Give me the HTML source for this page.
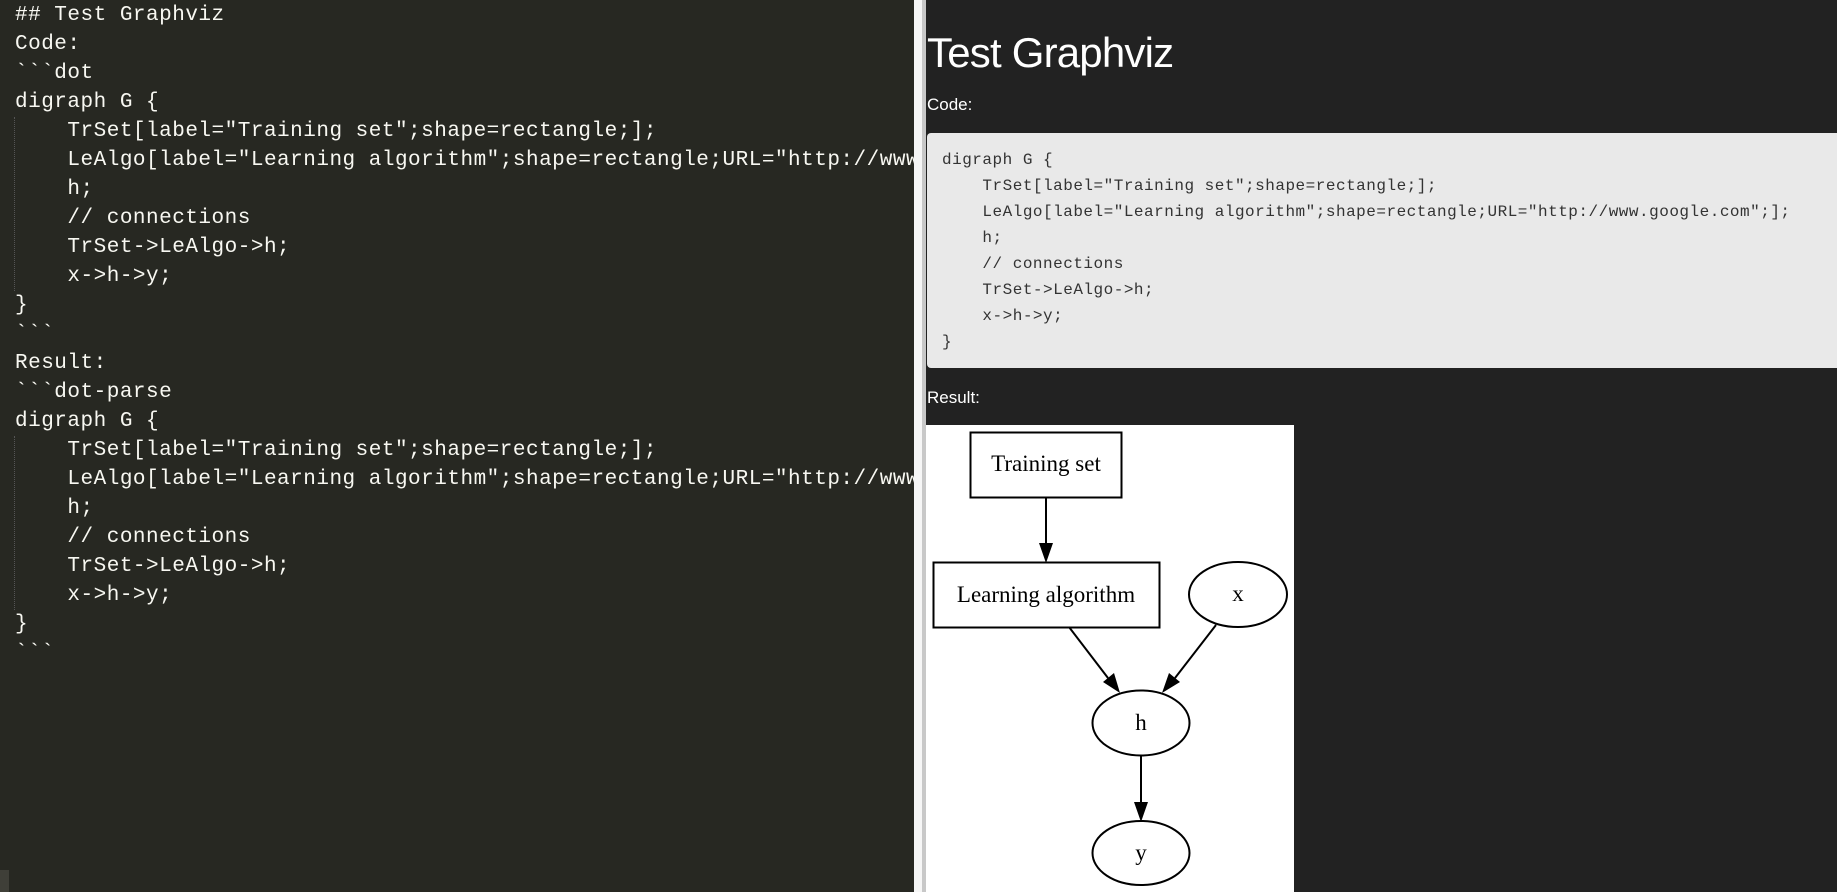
<!DOCTYPE html>
<html><head><meta charset="utf-8"><style>
*{margin:0;padding:0;box-sizing:border-box}
html,body{width:1837px;height:892px;overflow:hidden;background:#222}
#left{position:absolute;left:0;top:0;width:914px;height:892px;background:#272822;overflow:hidden}
#left .ln{position:absolute;left:15px;font-family:"Liberation Mono",monospace;font-size:21px;letter-spacing:0.5px;color:#f8f8f2;white-space:pre;line-height:29px;height:29px}
.guide{position:absolute;left:14px;width:0;border-left:1px dotted #555}
#sb1{position:absolute;left:914px;top:0;width:8px;height:892px;background:#f6f6f6}
#sb2{position:absolute;left:922px;top:0;width:4px;height:892px;background:#c8c8c8}
#right{position:absolute;left:926px;top:0;width:911px;height:892px;background:#222;color:#fff;font-family:"Liberation Sans",sans-serif;overflow:hidden}
h1{position:absolute;left:1px;top:29px;font-size:42px;font-weight:normal;letter-spacing:-0.8px;line-height:48px}
.lab{position:absolute;left:1px;font-size:17px;line-height:20px}
#code{position:absolute;left:1px;top:133px;width:920px;height:235px;background:#e9e9e9;border-radius:4px}
#code .c{position:absolute;left:15px;font-family:"Liberation Mono",monospace;font-size:16px;letter-spacing:0.5px;color:#333;white-space:pre;line-height:26px}
#img{position:absolute;left:0;top:425px;width:368px;height:467px;background:#fff}
</style></head><body>
<div id="left">
<div class="ln" style="top:1px">## Test Graphviz</div>
<div class="ln" style="top:30px">Code:</div>
<div class="ln" style="top:59px">&#96;&#96;&#96;dot</div>
<div class="ln" style="top:88px">digraph G {</div>
<div class="ln" style="top:117px">    TrSet[label="Training set";shape=rectangle;];</div>
<div class="ln" style="top:146px">    LeAlgo[label="Learning algorithm";shape=rectangle;URL="http://www.google.com";];</div>
<div class="ln" style="top:175px">    h;</div>
<div class="ln" style="top:204px">    // connections</div>
<div class="ln" style="top:233px">    TrSet-&gt;LeAlgo-&gt;h;</div>
<div class="ln" style="top:262px">    x-&gt;h-&gt;y;</div>
<div class="ln" style="top:291px">}</div>
<div class="ln" style="top:320px">&#96;&#96;&#96;</div>
<div class="ln" style="top:349px">Result:</div>
<div class="ln" style="top:378px">&#96;&#96;&#96;dot-parse</div>
<div class="ln" style="top:407px">digraph G {</div>
<div class="ln" style="top:436px">    TrSet[label="Training set";shape=rectangle;];</div>
<div class="ln" style="top:465px">    LeAlgo[label="Learning algorithm";shape=rectangle;URL="http://www.google.com";];</div>
<div class="ln" style="top:494px">    h;</div>
<div class="ln" style="top:523px">    // connections</div>
<div class="ln" style="top:552px">    TrSet-&gt;LeAlgo-&gt;h;</div>
<div class="ln" style="top:581px">    x-&gt;h-&gt;y;</div>
<div class="ln" style="top:610px">}</div>
<div class="ln" style="top:639px">&#96;&#96;&#96;</div>
<div class="guide" style="top:117px;height:174px"></div>
<div class="guide" style="top:436px;height:174px"></div>
<div style="position:absolute;left:0;top:870px;width:9px;height:22px;background:#3f3f38"></div>
</div>
<div id="sb1"></div><div id="sb2"></div>
<div id="right">
<h1>Test Graphviz</h1>
<div class="lab" style="top:95px">Code:</div>
<div id="code">
<div class="c" style="top:14px">digraph G {</div>
<div class="c" style="top:40px">    TrSet[label="Training set";shape=rectangle;];</div>
<div class="c" style="top:66px">    LeAlgo[label="Learning algorithm";shape=rectangle;URL="http://www.google.com";];</div>
<div class="c" style="top:92px">    h;</div>
<div class="c" style="top:118px">    // connections</div>
<div class="c" style="top:144px">    TrSet-&gt;LeAlgo-&gt;h;</div>
<div class="c" style="top:170px">    x-&gt;h-&gt;y;</div>
<div class="c" style="top:196px">}</div>
</div>
<div class="lab" style="top:388px">Result:</div>
<div id="img">
<svg width="368" height="467" viewBox="926 425 368 467" xmlns="http://www.w3.org/2000/svg" font-family="Liberation Serif, serif" font-size="23" text-anchor="middle">
<g fill="none" stroke="#000" stroke-width="2">
<rect x="970.5" y="432.5" width="151" height="65"/>
<rect x="933.5" y="562.5" width="226" height="65"/>
<ellipse cx="1238" cy="594.5" rx="49" ry="32.5"/>
<ellipse cx="1141" cy="723" rx="48.5" ry="32.5"/>
<ellipse cx="1141" cy="853" rx="48.5" ry="32"/>
<path d="M1046 497 L1046 545"/>
<path d="M1069 627 L1108 678"/>
<path d="M1216 625 L1175 678"/>
<path d="M1141 756 L1141 804"/>
</g>
<g fill="#000">
<path d="M1039 543 L1053 543 L1046 563 Z"/>
<path d="M1103 682 L1114 673 L1120 693 Z"/>
<path d="M1169 673 L1180 682 L1162 693 Z"/>
<path d="M1134 802 L1148 802 L1141 822 Z"/>
</g>
<text x="1046" y="471">Training set</text>
<text x="1046" y="602">Learning algorithm</text>
<text x="1238" y="601">x</text>
<text x="1141" y="730">h</text>
<text x="1141" y="860">y</text>
</svg>
</div>
</div>
</body></html>
